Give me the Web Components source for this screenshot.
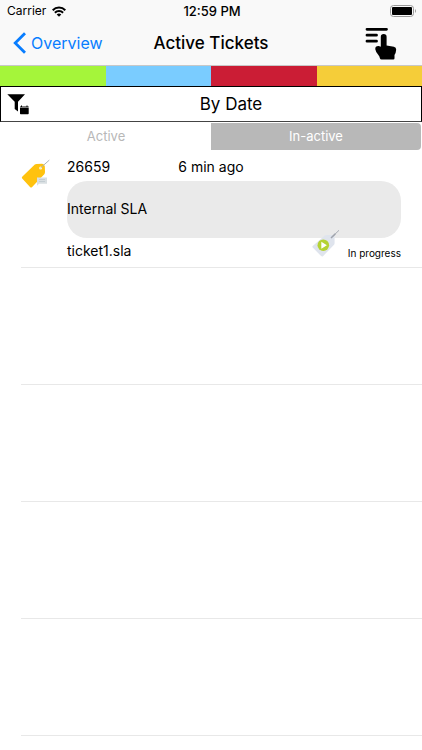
<!DOCTYPE html>
<html lang="en">
<head>
<meta charset="utf-8">
<meta name="viewport" content="width=device-width, initial-scale=1">
<title>Active Tickets</title>
<style>
html, body { margin: 0; background: #fff; }
body { font-family: Inter, "Liberation Sans", sans-serif; color: #000; }
</style>
</head>
<body>
<tickets-page></tickets-page>
<script>
const define = (name, html) => {
  const template = document.createElement('template');
  template.innerHTML = '<style>*{box-sizing:border-box}:host{box-sizing:border-box}button{font:inherit;color:inherit;background:none;border:0;padding:0;margin:0;cursor:pointer}svg{display:block}</style>' + html;
  customElements.define(name, class extends HTMLElement {
    constructor() {
      super();
      this.attachShadow({ mode: 'open' }).append(template.content.cloneNode(true));
    }
  });
};

define('status-bar', `
<style>
:host { display: grid; grid-template-columns: 1fr auto 1fr; align-items: center; height: 22px; padding: 0 5px 0 7px; font-size: 12px; line-height: 22px; }
.left { display: flex; align-items: center; gap: 6px; }
.time { font-weight: 500; font-size: 13px; }
.battery { justify-self: end; }
</style>
<div class="left"><span>Carrier</span>
<svg width="14" height="11" viewBox="0 0 14 11" fill="none" stroke="#000" stroke-width="2"><path d="M.7 4.2C4.2.6 9.800.6 13.300 4.200M2.900 6.700C5.200 4.300 8.800 4.300 11.100 6.700"/><path d="M4.700 8.400Q7 6.400 9.300 8.400L7 10.800Z" fill="#000" stroke="none"/></svg></div>
<time class="time">12:59 PM</time>
<svg class="battery" width="27" height="12" viewBox="0 0 27 12"><rect x=".5" y=".5" width="23" height="11" rx="3" fill="none" stroke="#999"/><rect x="2" y="2" width="20" height="8" rx="1"/><path d="M25 4q2 2 0 4z" fill="#999"/></svg>
`);

define('nav-bar', `
<style>
:host { display: grid; grid-template-columns: 1fr auto 1fr; align-items: center; height: 43px; padding: 0 13px 2px; }
a { display: flex; align-items: center; gap: 5px; color: #087dff; text-decoration: none; font-size: 16px; line-height: 24px; }
h1 { margin: 0; font-size: 17px; line-height: 24px; font-weight: 500; white-space: nowrap; }
button { justify-self: end; margin-right: 12px; }
</style>
<a href="#overview"><svg width="13" height="22" viewBox="0 0 13 22" fill="none" stroke="#087dff" stroke-width="2.800"><path d="M12 1.200 2.200 11 12 20.800"/></svg><slot name="back"></slot></a>
<h1><slot></slot></h1>
<button type="button" aria-label="Choose action"><svg width="33" height="34" viewBox="0 0 33 34"><path d="M3 3.300h19.500M3 9.200h9.500M3 15.200h9.500" stroke="#000" stroke-width="2.800" stroke-linecap="round"/><path d="M16.800 10.800q0-2.700 2.900-2.700t2.900 2.700v8.700l7.300 1.200q2.400.5 2.300 3-.2 2.800-1.700 5.400v3.200q0 1.200-1.200 1.200H17.600q-1.400 0-1.700-1.300-.2-1.800-1.700-3.400-2.300-2.300-2.900-5.500-.3-3.400 3.400-3.300l2.100.8z"/></svg></button>
`);

define('priority-strip', `
<style>
:host { display: grid; grid-template-columns: repeat(4, 1fr); height: 21px; border-top: 1px solid #c8c8c8; }
.green { background: #a5f53a; } .blue { background: #7accff; } .red { background: #cb1d35; } .yellow { background: #f5cd39; }
</style>
<i class="green"></i><i class="blue"></i><i class="red"></i><i class="yellow"></i>
`);

define('filter-bar', `
<style>
:host { display: flex; height: 36px; border: 1px solid #000; border-bottom-color: #444; background: #fff; }
.icon { width: 40px; padding-left: 6px; }
.sort { flex: 1; font-size: 17px; line-height: 34px; }
</style>
<button class="icon" type="button" aria-label="Filter by date"><svg width="23" height="22" viewBox="0 0 23 22"><path d="M.3 1.200H18L11 8.800v9.700L7.700 16V8.800z"/><path d="M13 15h8.700v5.500q0 .7-.7.700h-7.300q-.7 0-.7-.7zM13 14.500v-1h1v-1h1v1h4.500v-1h1v1h1.200v1z"/></svg></button>
<button class="sort" type="button"><slot></slot></button>
`);

define('segment-control', `
<style>
:host { display: block; padding: 1px; }
div { display: grid; grid-template-columns: 1fr 1fr; }
button { height: 27px; font-size: 13px; line-height: 27px; color: #b8b8b8; }
button + button { background: #b8b8b8; color: #fff; border-radius: 0 4px 4px 0; }
</style>
<div role="tablist"><button type="button" role="tab" aria-selected="false"><slot name="first"></slot></button><button type="button" role="tab" aria-selected="true"><slot name="second"></slot></button></div>
`);

define('list-row', `
<style>
:host { display: flex; flex-direction: column; height: 117px; }
.body { flex: 1; }
.line { height: 1px; margin-left: 21px; background: #e8e8e8; }
</style>
<div class="body"><slot></slot></div><div class="line"></div>
`);

define('ticket-item', `
<style>
:host { display: grid; grid-template-columns: 45px 1fr; padding: 7px 21px 0; font-size: 14px; line-height: 18px; }
.tag { margin-top: 1px; }
.content { padding-left: 1px; }
.head { display: grid; grid-template-columns: 1fr 2fr; height: 23px; }
.title { height: 57px; border-radius: 20px; background: #eaeaea; line-height: 56px; }
.foot { display: flex; justify-content: space-between; height: 26px; line-height: 26px; }
.state { position: relative; font-size: 10px; line-height: 30px; }
.progress { position: absolute; right: 100%; bottom: 6px; margin-right: 8px; }
</style>
<svg class="tag" width="30" height="29" viewBox="0 0 30 29"><path d="M1.200 17.700 13.800 5.600q.7-.6 1.700-.6l5.600-.2q2.300.2 2.700 2.500L24 13q0 1.500-.7 2.300L10.900 28.300Q10 29 9 28L1.200 19.600q-.8-1 0-1.900z" fill="#ffc20e"/><circle cx="19.600" cy="8.900" r="1.500" fill="#fff3d0"/><path d="m19.600 8.900 8.700-7.800" stroke="#aab5b8"/><path d="M16 18.500h10v6.300h-8l-2 2z" fill="#d9dfe2"/><path d="M18 20.500h6M18 22.500h6" stroke="#b9c5cb" stroke-width=".7"/></svg>
<div class="content"><div class="head"><slot name="id"></slot><slot name="age"></slot></div>
<div class="title"><slot name="title"></slot></div>
<div class="foot"><slot name="user"></slot><span class="state"><svg class="progress" width="28" height="29" viewBox="0 0 28 29"><path d="M.7 17 12.500 6.800q1-.7 2.500-.7h6.200q1.400 0 1.400 1.500v6.300q0 1.300-.8 2.100L11 27.200q-1 .8-1.900-.1L.7 18.500q-.7-.8 0-1.500z" fill="#dfe4ed"/><path d="m19 9 8-7.700" stroke="#a7abb3"/><path d="m19 9 4.300-4.100" stroke="#a0a4ad" stroke-width="1.500"/><circle cx="11.300" cy="16.200" r="5.800" fill="#b4d233"/><path d="m9.300 12.700 5.600 3.500-5.600 3.500z" fill="#fff"/></svg><slot name="state"></slot></span></div></div>
`);

define('tickets-page', `
<style>
:host { display: block; min-height: 100vh; background: #fff; }
header { background: #f9f9f9; }
</style>
<header><status-bar></status-bar><nav-bar><span slot="back">Overview</span>Active Tickets</nav-bar></header>
<priority-strip></priority-strip>
<filter-bar>By Date</filter-bar>
<segment-control><span slot="first">Active</span><span slot="second">In-active</span></segment-control>
<main>
<list-row><ticket-item><span slot="id">26659</span><span slot="age">6 min ago</span><span slot="title">Internal SLA</span><span slot="user">ticket1.sla</span><span slot="state">In progress</span></ticket-item></list-row>
<list-row></list-row><list-row></list-row><list-row></list-row><list-row></list-row>
</main>
`);
</script>
</body>
</html>
